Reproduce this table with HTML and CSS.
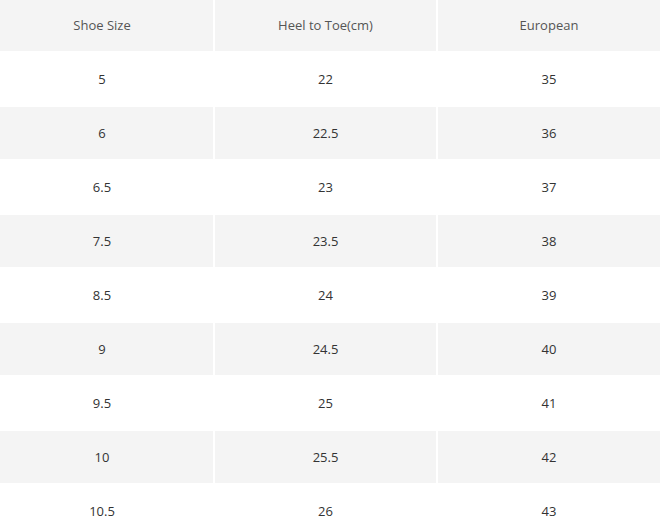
FILE: index.html
```html
<!DOCTYPE html>
<html>
<head>
<meta charset="utf-8">
<link rel="stylesheet" href="styles.css">
</head>
<body>
<div class="size-table">
  <div class="cell head">Shoe Size</div><div class="cell head">Heel to Toe(cm)</div><div class="cell head">European</div>
  <div class="cell">5</div><div class="cell">22</div><div class="cell">35</div>
  <div class="cell alt">6</div><div class="cell alt">22.5</div><div class="cell alt">36</div>
  <div class="cell">6.5</div><div class="cell">23</div><div class="cell">37</div>
  <div class="cell alt">7.5</div><div class="cell alt">23.5</div><div class="cell alt">38</div>
  <div class="cell">8.5</div><div class="cell">24</div><div class="cell">39</div>
  <div class="cell alt">9</div><div class="cell alt">24.5</div><div class="cell alt">40</div>
  <div class="cell">9.5</div><div class="cell">25</div><div class="cell">41</div>
  <div class="cell alt">10</div><div class="cell alt">25.5</div><div class="cell alt">42</div>
  <div class="cell">10.5</div><div class="cell">26</div><div class="cell">43</div>
</div>
</body>
</html>
```
FILE: styles.css
```css
html, body {
  margin: 0;
  padding: 0;
  background: #ffffff;
}
body {
  font-family: "Open Sans", "Liberation Sans", sans-serif;
  font-size: 13px;
  color: #333333;
  overflow: hidden;
}
.size-table {
  display: grid;
  width: 669px;
  margin: -1px 0 0 -9px;
  grid-template-columns: 222px 221px 222px;
  grid-auto-rows: 52px;
  gap: 2px;
}
.cell {
  display: flex;
  align-items: center;
  justify-content: center;
  background: #ffffff;
}
.head {
  background: #f4f4f4;
  color: #555555;
}
.alt {
  background: #f4f4f4;
}
```
